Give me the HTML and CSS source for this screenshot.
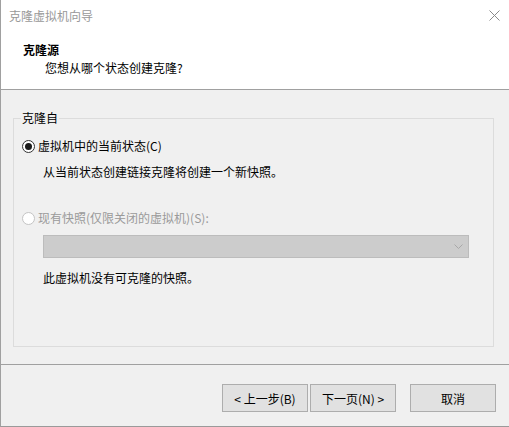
FILE: index.html
```html
<!DOCTYPE html>
<html lang="zh-CN">
<head>
  <meta charset="UTF-8">
  <title>克隆虚拟机向导</title>
  <link rel="stylesheet" href="styles.css">
</head>
<body>
  <div class="window">
    <div class="titlebar">
      <span class="title">克隆虚拟机向导</span>
      <svg class="close" width="11" height="11" viewBox="0 0 11 11">
        <path d="M0.5 0.5 L10.5 10.5 M10.5 0.5 L0.5 10.5" stroke="#8a8a8a" stroke-width="1" fill="none"/>
      </svg>
    </div>
    <div class="header">
      <div class="header-title">克隆源</div>
      <div class="header-sub">您想从哪个状态创建克隆?</div>
    </div>
    <div class="content">
      <fieldset class="group">
        <legend>克隆自</legend>
        <label class="radio-row">
          <span class="radio checked"></span>
          <span>虚拟机中的当前状态(C)</span>
        </label>
        <p class="note">从当前状态创建链接克隆将创建一个新快照。</p>
        <label class="radio-row disabled">
          <span class="radio"></span>
          <span>现有快照(仅限关闭的虚拟机)(S):</span>
        </label>
        <div class="combo">
          <svg width="9" height="5" viewBox="0 0 9 5">
            <path d="M0.5 0.5 L4.5 4.5 L8.5 0.5" stroke="#a8a8a8" stroke-width="1" fill="none"/>
          </svg>
        </div>
        <p class="note last-note">此虚拟机没有可克隆的快照。</p>
      </fieldset>
    </div>
    <div class="footer">
      <button class="btn">&lt; 上一步(B)</button>
      <button class="btn">下一页(N) &gt;</button>
      <button class="btn cancel">取消</button>
    </div>
  </div>
</body>
</html>
```

FILE: styles.css
```css
html, body {
  margin: 0;
  padding: 0;
}
body {
  width: 509px;
  height: 427px;
  overflow: hidden;
  font-family: "Noto Sans CJK SC", "Microsoft YaHei", sans-serif;
  font-size: 12px;
  line-height: 16px;
  color: #000;
  background: #f0f0f0;
}
.window {
  height: 426px;
  border-left: 1px solid #a0a0a0;
  border-bottom: 1px solid #9a9a9a;
  display: flex;
  flex-direction: column;
}
.titlebar {
  height: 31px;
  background: #fff;
  display: flex;
  align-items: center;
  justify-content: space-between;
  padding: 0 9px 0 8px;
}
.title {
  color: #999;
}
.header {
  height: 59px;
  box-sizing: border-box;
  background: #fff;
  border-bottom: 1px solid #a0a0a0;
  padding-top: 11px;
}
.header-title {
  font-weight: bold;
  padding-left: 22px;
}
.header-sub {
  margin-top: 2px;
  padding-left: 44px;
}
.content {
  height: 274px;
  box-sizing: border-box;
  padding: 20px 15px 17px 12px;
  display: flex;
}
.group {
  flex: 1;
  margin: 0;
  padding: 0 7px;
  border: 1px solid #dcdcdc;
  min-width: 0;
}
.group legend {
  padding: 0 1px;
  line-height: 16px;
}
.radio-row {
  display: flex;
  align-items: center;
  gap: 3px;
  margin-top: 12px;
  height: 16px;
}
.radio-row.disabled {
  color: #9a9a9a;
  margin-top: 30px;
}
.radio {
  width: 13px;
  height: 13px;
  box-sizing: border-box;
  margin-left: 1px;
  border: 1px solid #c4c4c4;
  border-radius: 50%;
  background: #fff;
  display: flex;
  align-items: center;
  justify-content: center;
}
.radio.checked {
  border-color: #333;
}
.radio.checked::after {
  content: "";
  width: 7px;
  height: 7px;
  border-radius: 50%;
  background: #1a1a1a;
}
.note {
  margin: 10px 0 0 22px;
}
.last-note {
  margin-top: 12px;
}
.combo {
  margin: 9px 0 0 22px;
  width: 426px;
  height: 23px;
  box-sizing: border-box;
  background: #cccccc;
  border: 1px solid #bcbcbc;
  display: flex;
  align-items: center;
  justify-content: flex-end;
  padding-right: 5px;
}
.footer {
  flex: 1;
  border-top: 1px solid #a0a0a0;
  display: flex;
  justify-content: flex-end;
  align-items: flex-start;
  padding: 19px 13px 0 0;
}
.btn {
  width: 86px;
  height: 28px;
  margin-left: 2px;
  font-family: inherit;
  font-size: 12px;
  color: #000;
  background: #e1e1e1;
  border: 1px solid #adadad;
  padding: 0;
}
.btn.cancel {
  margin-left: 14px;
}
```
